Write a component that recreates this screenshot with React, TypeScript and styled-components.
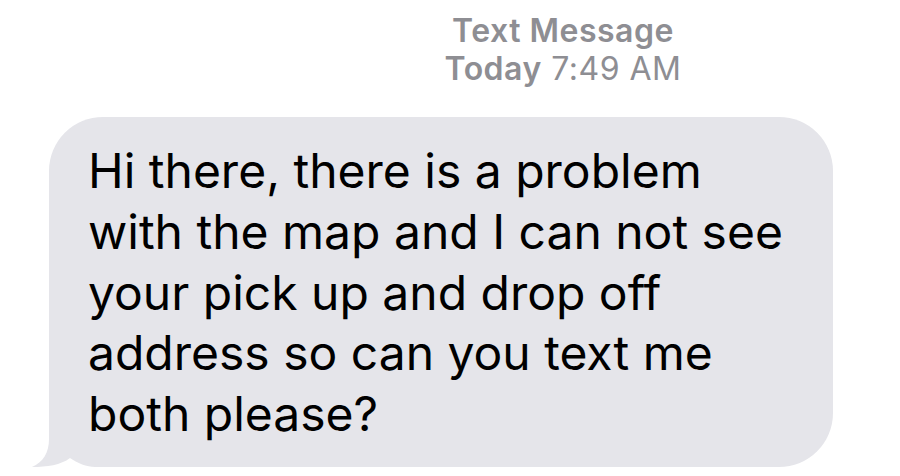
import React from "react";
import styled, { createGlobalStyle } from "styled-components";

const GlobalStyle = createGlobalStyle`
  html, body {
    margin: 0;
    padding: 0;
    background: #ffffff;
  }
  body {
    font-family: Inter, "Liberation Sans", Arial, sans-serif;
  }
`;

const Screen = styled.div`
  width: 900px;
  height: 476px;
  overflow: hidden;
  display: flex;
  flex-direction: column;
  background: #ffffff;
`;

const Header = styled.div`
  display: flex;
  flex-direction: column;
  align-items: center;
  padding-left: 226px;
  padding-top: 12px;
  color: #8e8e93;
  font-size: 32px;
  line-height: 38px;
  letter-spacing: 0.5px;
`;

const Strong = styled.span`
  font-weight: 600;
`;

const Regular = styled.span`
  font-weight: 400;
`;

const Thread = styled.div`
  display: flex;
  padding-left: 49px;
  padding-top: 29px;
`;

const Bubble = styled.div`
  position: relative;
  width: 784px;
  height: 350px;
  box-sizing: border-box;
  background: #e5e5ea;
  border-radius: 54px;
  padding: 24px 20px 0 39px;
  color: #000000;
  font-size: 48px;
  line-height: 60.8px;
`;

const Tail = styled.svg`
  position: absolute;
  left: -20px;
  bottom: 0;
  width: 80px;
  height: 60px;
  z-index: 0;
`;

const Line = styled.div`
  position: relative;
  z-index: 1;
  white-space: nowrap;
`;

const lines = [
  "Hi there, there is a problem",
  "with the map and I can not see",
  "your pick up and drop off",
  "address so can you text me",
  "both please?",
];

export default function App() {
  return (
    <Screen>
      <GlobalStyle />
      <Header>
        <Strong>Text Message</Strong>
        <div>
          <Strong>Today</Strong> <Regular>7:49 AM</Regular>
        </div>
      </Header>
      <Thread>
        <Bubble>
          <Tail viewBox="0 0 80 60">
            <path
              d="M20 0 L80 0 L80 60 L66 60 C58 60 48 56 41 51 C32 58 18 60 3 60 C14 55 20 46 20 32 Z"
              fill="#e5e5ea"
            />
          </Tail>
          {lines.map((l) => (
            <Line key={l}>{l}</Line>
          ))}
        </Bubble>
      </Thread>
    </Screen>
  );
}
